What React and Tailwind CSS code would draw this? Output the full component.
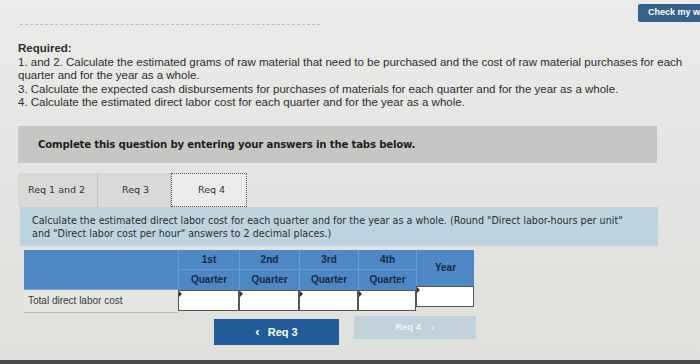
export default function App() {
  const quarters = [
    { top: '1st', w: 'w-[61px]' },
    { top: '2nd', w: 'w-[60px]' },
    { top: '3rd', w: 'w-[59px]' },
    { top: '4th', w: 'w-[58px]' },
  ];

  return (
    <div className="w-[700px] h-[364px] overflow-hidden flex flex-col bg-gradient-to-b from-[#ebebea] via-[#e4e4e2] to-[#dfdfdc] font-['Liberation_Sans',Arial,sans-serif] text-[#2b2b2b]">
      {/* top strip with faded toolbar text and check button */}
      <div className="flex items-start justify-between pl-[20px] pt-[4px]">
        <div className="mt-[20px] w-[300px] border-t border-dashed border-[#bdbdbd]"></div>
        <button className="h-[18px] w-[62px] rounded-l-[2px] bg-[#34628b] text-white text-[9px] font-bold text-left pl-[10px] whitespace-nowrap overflow-hidden">
          Check my w
        </button>
      </div>

      {/* required section */}
      <div className="pl-[18px] pr-[4px] mt-[17px] text-[11.5px] leading-[13.6px] text-[#2e2e2e]">
        <p className="font-bold">Required:</p>
        <p>1. and 2. Calculate the estimated grams of raw material that need to be purchased and the cost of raw material purchases for each quarter and for the year as a whole.</p>
        <p>3. Calculate the expected cash disbursements for purchases of materials for each quarter and for the year as a whole.</p>
        <p>4. Calculate the estimated direct labor cost for each quarter and for the year as a whole.</p>
      </div>

      {/* instructions bar */}
      <div className="ml-[18px] mt-[16px] w-[639px] h-[37px] bg-[#c6c7c4] flex items-center pl-[20px]">
        <span className="text-[10.2px] font-bold text-[#1f1f1f] font-['DejaVu_Sans',Verdana,sans-serif] tracking-[-0.2px]">
          Complete this question by entering your answers in the tabs below.
        </span>
      </div>

      {/* tabs */}
      <div className="ml-[18px] mt-[10px] flex h-[34px] font-['DejaVu_Sans',Verdana,sans-serif] text-[9.5px] text-[#333]">
        <div className="w-[80px] bg-[#d9d9d7] border-r border-[#c4c4c2] flex items-center pl-[10px]">Req 1 and 2</div>
        <div className="w-[73px] bg-[#d9d9d7] border-r border-[#c4c4c2] flex items-center pl-[24px]">Req 3</div>
        <div className="w-[76px] bg-[#ececea] border border-dotted border-[#555] flex items-center pl-[26px]">Req 4</div>
      </div>

      {/* blue question panel */}
      <div className="ml-[20px] w-[638px] h-[39px] bg-[#bdd3de] pl-[12px] pt-[7px] font-['DejaVu_Sans',Verdana,sans-serif] text-[9.6px] leading-[13px] text-[#2e2e2e] whitespace-nowrap">
        Calculate the estimated direct labor cost for each quarter and for the year as a whole. (Round "Direct labor-hours per unit"
        <br />
        and "Direct labor cost per hour" answers to 2 decimal places.)
      </div>

      {/* table */}
      <div className="ml-[24px] mt-[4px] flex text-[10px]">
        <div className="flex flex-col w-[154px]">
          <div className="h-[40px] bg-[#4d87c6] border-b border-[#7ea4cc]"></div>
          <div className="h-[23px] bg-[#e5e5e2] border-b border-[#b9b9b6] flex items-center pl-[4px] text-[#3a3a3a]">
            Total direct labor cost
          </div>
        </div>
        {quarters.map((q) => (
          <div key={q.top} className={`flex flex-col ${q.w}`}>
            <div className="h-[20px] bg-[#4d87c6] border-l border-b border-[#6a9bd0] flex items-center justify-center font-bold text-[#182a42]">
              {q.top}
            </div>
            <div className="h-[20px] bg-[#4d87c6] border-l border-[#6a9bd0] flex items-center justify-center font-bold text-[#182a42]">
              Quarter
            </div>
            <div className="h-[21px] bg-white border-[1.5px] border-[#555] relative">
              <span className="absolute left-0 top-0 w-0 h-0 border-t-[3px] border-b-[3px] border-l-[3px] border-t-transparent border-b-transparent border-l-[#333]"></span>
            </div>
          </div>
        ))}
        <div className="flex flex-col w-[58px]">
          <div className="h-[36px] bg-[#4d87c6] border-l border-[#6a9bd0] flex items-center justify-center font-bold text-[#182a42]">
            Year
          </div>
          <div className="h-[21px] bg-white border-[1.5px] border-[#555] relative">
            <span className="absolute left-0 top-0 w-0 h-0 border-t-[3px] border-b-[3px] border-l-[3px] border-t-transparent border-b-transparent border-l-[#333]"></span>
          </div>
        </div>
      </div>

      {/* navigation buttons */}
      <div className="ml-[214px] mt-[3px] flex items-start gap-[15px]">
        <button className="mt-[3px] w-[125px] h-[26px] bg-[#1f5c99] text-white text-[11px] font-bold flex items-center justify-center gap-[8px]">
          <span className="text-[13px] leading-none">&lsaquo;</span>
          <span>Req 3</span>
        </button>
        <button className="w-[122px] h-[23px] bg-[#c2d1da] text-[#eef3f6] text-[9.5px] font-bold flex items-center justify-center gap-[10px]">
          <span>Req 4</span>
          <span className="text-[11px] leading-none">&rsaquo;</span>
        </button>
      </div>

      <div className="flex-1"></div>
      <div className="h-[4px] bg-[#4a4a4a]"></div>
    </div>
  );
}
